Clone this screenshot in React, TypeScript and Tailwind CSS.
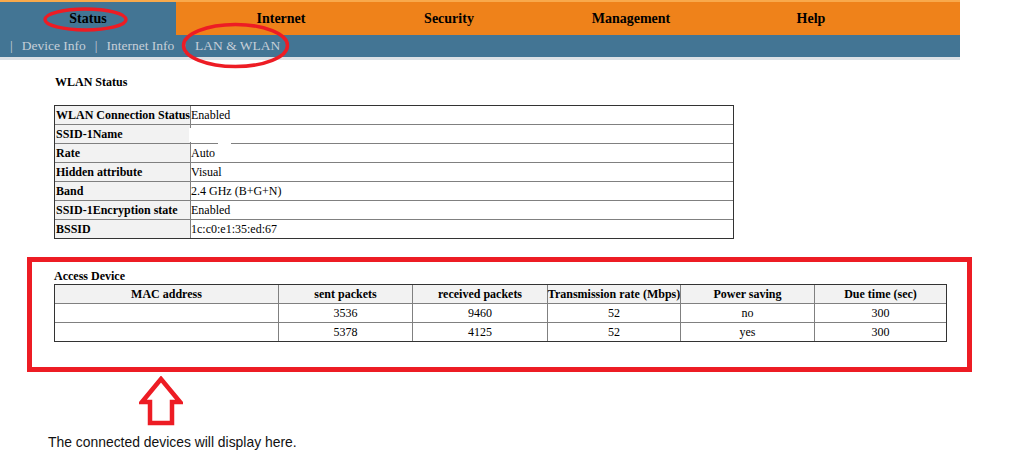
import React from 'react';

const NAV_ITEMS: { label: string; width: string; active?: boolean }[] = [
  { label: 'Status', width: 'w-[176px]', active: true },
  { label: 'Internet', width: 'w-[210px]' },
  { label: 'Security', width: 'w-[126px]' },
  { label: 'Management', width: 'w-[238px]' },
  { label: 'Help', width: 'w-[122px]' },
];

const SUB_ITEMS = ['Device Info', 'Internet Info', 'LAN & WLAN'];

const WLAN_ROWS: [string, string][] = [
  ['WLAN Connection Status', 'Enabled'],
  ['SSID-1Name', ''],
  ['Rate', 'Auto'],
  ['Hidden attribute', 'Visual'],
  ['Band', '2.4 GHz (B+G+N)'],
  ['SSID-1Encryption state', 'Enabled'],
  ['BSSID', '1c:c0:e1:35:ed:67'],
];

const DEVICE_COLS = [
  { title: 'MAC address', width: 'w-[223px]' },
  { title: 'sent packets', width: 'w-[134px]' },
  { title: 'received packets', width: 'w-[135px]' },
  { title: 'Transmission rate (Mbps)', width: 'w-[133px]' },
  { title: 'Power saving', width: 'w-[134px]' },
  { title: 'Due time (sec)', width: 'flex-1' },
];

const DEVICES = [
  ['', '3536', '9460', '52', 'no', '300'],
  ['', '5378', '4125', '52', 'yes', '300'],
];

function TopNav() {
  return (
    <div className="w-[960px]">
      <div className="h-[2px] bg-[#f9a94b]" />
      <div className="flex h-[33px] bg-[#ef821a] text-[14px] font-bold text-black">
        {NAV_ITEMS.map((item) => (
          <div
            key={item.label}
            className={`${item.width} flex items-center justify-center ${item.active ? 'bg-[#437594]' : ''}`}
          >
            {item.label}
          </div>
        ))}
      </div>
      <div className="flex h-[22px] items-center gap-[9px] bg-[#437594] pl-[10px] text-[13.5px] text-[#c6cfd8]">
        {SUB_ITEMS.map((label) => (
          <React.Fragment key={label}>
            <span>|</span>
            <span>{label}</span>
          </React.Fragment>
        ))}
      </div>
      <div className="h-[3px] bg-[#dde1e5]" />
    </div>
  );
}

function WlanStatus() {
  return (
    <div className="pl-[55px] pt-[15px]">
      <p className="text-[12px] font-bold leading-[14px]">WLAN Status</p>
      <div className="relative mt-[16px] ml-[-1px] w-[680px] border border-[#333]">
        {WLAN_ROWS.map(([label, value], i) => (
          <div key={label} className={`flex text-[12px] ${i > 0 ? 'h-[19px] border-t border-[#808080]' : 'h-[18px]'}`}>
            <div className="flex w-[136px] items-center border-r border-[#808080] bg-[#f2f2f2] pl-[1px] font-bold whitespace-nowrap">
              {label}
            </div>
            <div className="flex items-center">{value}</div>
          </div>
        ))}
        {/* blanked-out SSID value */}
        <div className="absolute left-[134px] top-[22px] h-[14px] w-[44px] bg-white" />
        <div className="absolute left-[163px] top-[35px] h-[4px] w-[13px] bg-white" />
      </div>
    </div>
  );
}

function AccessDevice() {
  return (
    <div className="mt-[18px] ml-[27px] w-[945px] border-[5px] border-[#ed1c24] pl-[22px] pt-[7px] pb-[25px]">
      <p className="text-[12px] font-bold leading-[14px]">Access Device</p>
      <div className="mt-[1px] w-[893px] border border-[#333] text-[12px]">
        <div className="flex h-[18px] bg-[#f2f2f2] font-bold">
          {DEVICE_COLS.map((col, i) => (
            <div
              key={col.title}
              className={`${col.width} flex items-center justify-center whitespace-nowrap ${i > 0 ? 'border-l border-[#808080]' : ''}`}
            >
              {col.title}
            </div>
          ))}
        </div>
        {DEVICES.map((row, r) => (
          <div key={r} className="flex h-[19px] border-t border-[#808080]">
            {row.map((cell, i) => (
              <div
                key={i}
                className={`${DEVICE_COLS[i].width} flex items-center justify-center ${i > 0 ? 'border-l border-[#808080]' : ''}`}
              >
                {cell}
              </div>
            ))}
          </div>
        ))}
      </div>
    </div>
  );
}

export default function App() {
  return (
    <div className="relative h-[466px] w-[1018px] overflow-hidden bg-white font-['Liberation_Serif','Times_New_Roman',serif] text-black">
      <TopNav />
      <WlanStatus />
      <AccessDevice />

      <svg className="mt-[4px] ml-[139px]" width="44" height="52" viewBox="0 0 44 52">
        <polygon
          points="22,3 3,26 11,26 11,47 33,47 33,26 41,26"
          fill="none"
          stroke="#ed1c24"
          strokeWidth="4.5"
          strokeLinejoin="miter"
        />
      </svg>
      <p className="mt-[6px] ml-[48px] font-['Liberation_Sans',Arial,sans-serif] text-[13.9px] leading-[16px] text-[#111]">
        The connected devices will display here.
      </p>

      {/* annotation ellipses */}
      <svg className="pointer-events-none absolute left-0 top-0" width="320" height="80">
        <ellipse cx="85.5" cy="19.5" rx="40.5" ry="10.5" fill="none" stroke="#ed1c24" strokeWidth="3.5" />
        <ellipse cx="235.5" cy="45.5" rx="52" ry="21" fill="none" stroke="#ed1c24" strokeWidth="3.5" />
      </svg>
    </div>
  );
}
